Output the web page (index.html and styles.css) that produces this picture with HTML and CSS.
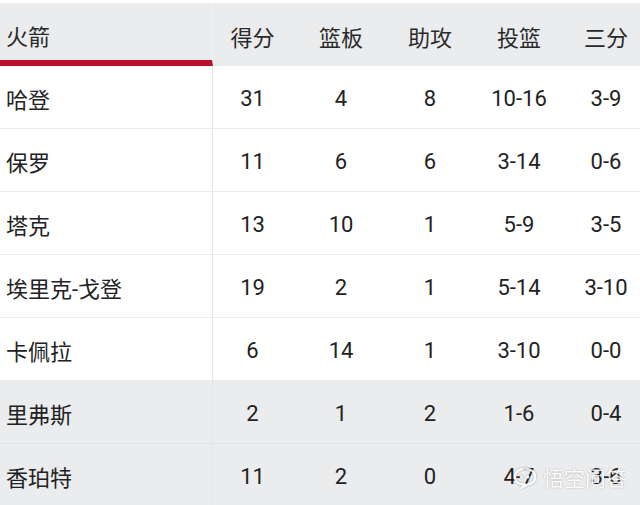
FILE: index.html
```html
<!DOCTYPE html>
<html lang="zh">
<head>
<meta charset="utf-8">
<link rel="stylesheet" href="styles.css">
</head>
<body>
<div class="table">
  <div class="row head">
    <div class="cell name team">火箭</div>
    <div class="cell">得分</div>
    <div class="cell">篮板</div>
    <div class="cell">助攻</div>
    <div class="cell">投篮</div>
    <div class="cell">三分</div>
  </div>
  <div class="row">
    <div class="cell name">哈登</div><div class="cell">31</div><div class="cell">4</div><div class="cell">8</div><div class="cell">10-16</div><div class="cell">3-9</div>
  </div>
  <div class="row">
    <div class="cell name">保罗</div><div class="cell">11</div><div class="cell">6</div><div class="cell">6</div><div class="cell">3-14</div><div class="cell">0-6</div>
  </div>
  <div class="row">
    <div class="cell name">塔克</div><div class="cell">13</div><div class="cell">10</div><div class="cell">1</div><div class="cell">5-9</div><div class="cell">3-5</div>
  </div>
  <div class="row">
    <div class="cell name">埃里克-戈登</div><div class="cell">19</div><div class="cell">2</div><div class="cell">1</div><div class="cell">5-14</div><div class="cell">3-10</div>
  </div>
  <div class="row">
    <div class="cell name">卡佩拉</div><div class="cell">6</div><div class="cell">14</div><div class="cell">1</div><div class="cell">3-10</div><div class="cell">0-0</div>
  </div>
  <div class="row bench">
    <div class="cell name">里弗斯</div><div class="cell">2</div><div class="cell">1</div><div class="cell">2</div><div class="cell">1-6</div><div class="cell">0-4</div>
  </div>
  <div class="row bench">
    <div class="cell name">香珀特</div><div class="cell">11</div><div class="cell">2</div><div class="cell">0</div><div class="cell">4-7</div><div class="cell">3-6</div>
  </div>
</div>
<div class="watermark">
  <svg class="wm-logo" width="26" height="24" viewBox="0 0 28 24">
    <path d="M14 3 C7 3 3 7 3 12 C3 17 7 20 13 20 L11 23 L17 20 C22 19 25 16 25 12 C25 7 21 3 14 3 Z" fill="none" stroke="#fff" stroke-width="2.4"/>
    <circle cx="10" cy="12" r="1.8" fill="#fff"/>
    <circle cx="17" cy="12" r="1.8" fill="#fff"/>
  </svg>
  <span class="wm-text">悟空问答</span>
</div>
</body>
</html>
```

FILE: styles.css
```css
* { box-sizing: border-box; }
html, body { margin: 0; padding: 0; background: #fff; }
body {
  width: 640px;
  height: 505px;
  overflow: hidden;
  position: relative;
  font-family: Roboto, "Noto Sans CJK SC", sans-serif;
  color: #222;
}
.table {
  padding-top: 3px;
}
.row {
  display: grid;
  grid-template-columns: 213px 79px 98px 80px 98px 76px;
  height: 63px;
  border-bottom: 1px solid #ececec;
  font-size: 22px;
}
.row.head {
  background: #ebecee;
  border-bottom: none;
  color: #2a2a2a;
}
.row.bench {
  background: #ebecee;
  border-bottom-color: #e2e3e5;
}
.cell {
  display: flex;
  align-items: center;
  justify-content: center;
  padding-top: 3px;
  white-space: nowrap;
}
.cell.name {
  justify-content: flex-start;
  padding-left: 6px;
  padding-top: 1px;
  border-right: 1px solid #e4e4e4;
}
.head .cell.name {
  border-right-color: #f2f3f4;
}
.cell.team {
  border-bottom: 6px solid #b8102d;
  padding-top: 6px;
}
.watermark {
  position: absolute;
  left: 512px;
  top: 462px;
  display: flex;
  align-items: center;
  gap: 5px;
  opacity: 0.85;
}
.wm-logo {
  filter: drop-shadow(0 0 1px rgba(0,0,0,0.35));
}
.wm-text {
  font-family: "Noto Sans CJK SC", sans-serif;
  font-size: 21px;
  color: #fff;
  text-shadow: 0 0 2px rgba(0,0,0,0.35);
}
```
